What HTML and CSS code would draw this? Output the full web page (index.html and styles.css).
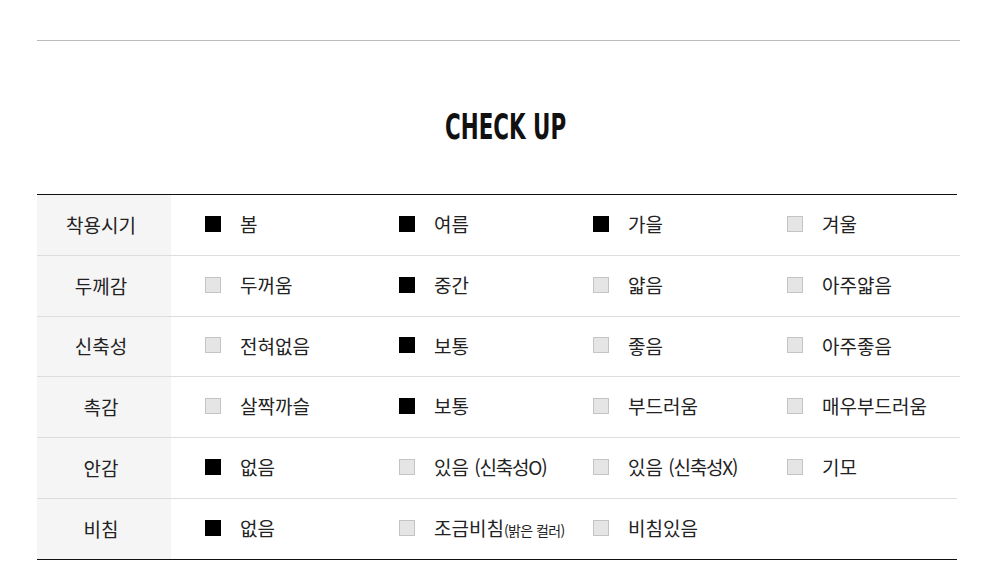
FILE: index.html
```html
<!DOCTYPE html>
<html lang="ko">
<head>
<meta charset="utf-8">
<link rel="stylesheet" href="styles.css">
</head>
<body>
<div class="wrap">
  <div class="topline"></div>
  <h2 class="title">CHECK UP</h2>
  <div class="table">
    <div class="row">
      <div class="head">착용시기</div>
      <div class="opts">
        <div class="opt"><span class="box on"></span><span class="lbl">봄</span></div>
        <div class="opt"><span class="box on"></span><span class="lbl">여름</span></div>
        <div class="opt"><span class="box on"></span><span class="lbl">가을</span></div>
        <div class="opt"><span class="box"></span><span class="lbl">겨울</span></div>
      </div>
    </div>
    <div class="row">
      <div class="head">두께감</div>
      <div class="opts">
        <div class="opt"><span class="box"></span><span class="lbl">두꺼움</span></div>
        <div class="opt"><span class="box on"></span><span class="lbl">중간</span></div>
        <div class="opt"><span class="box"></span><span class="lbl">얇음</span></div>
        <div class="opt"><span class="box"></span><span class="lbl">아주얇음</span></div>
      </div>
    </div>
    <div class="row">
      <div class="head">신축성</div>
      <div class="opts">
        <div class="opt"><span class="box"></span><span class="lbl">전혀없음</span></div>
        <div class="opt"><span class="box on"></span><span class="lbl">보통</span></div>
        <div class="opt"><span class="box"></span><span class="lbl">좋음</span></div>
        <div class="opt"><span class="box"></span><span class="lbl">아주좋음</span></div>
      </div>
    </div>
    <div class="row">
      <div class="head">촉감</div>
      <div class="opts">
        <div class="opt"><span class="box"></span><span class="lbl">살짝까슬</span></div>
        <div class="opt"><span class="box on"></span><span class="lbl">보통</span></div>
        <div class="opt"><span class="box"></span><span class="lbl">부드러움</span></div>
        <div class="opt"><span class="box"></span><span class="lbl">매우부드러움</span></div>
      </div>
    </div>
    <div class="row">
      <div class="head">안감</div>
      <div class="opts">
        <div class="opt"><span class="box on"></span><span class="lbl">없음</span></div>
        <div class="opt"><span class="box"></span><span class="lbl">있음 <span class="paren">(신축성O)</span></span></div>
        <div class="opt"><span class="box"></span><span class="lbl">있음 <span class="paren">(신축성X)</span></span></div>
        <div class="opt"><span class="box"></span><span class="lbl">기모</span></div>
      </div>
    </div>
    <div class="row">
      <div class="head">비침</div>
      <div class="opts">
        <div class="opt"><span class="box on"></span><span class="lbl">없음</span></div>
        <div class="opt"><span class="box"></span><span class="lbl">조금비침<span class="small">(밝은 컬러)</span></span></div>
        <div class="opt"><span class="box"></span><span class="lbl">비침있음</span></div>
        <div class="opt"></div>
      </div>
    </div>
  </div>
</div>
</body>
</html>
```

FILE: styles.css
```css
html, body {
  margin: 0;
  padding: 0;
  background: #fff;
}
body {
  font-family: "Noto Sans CJK KR", "Noto Sans", sans-serif;
  color: #222;
}
.wrap {
  width: 923px;
  margin: 0 0 0 37px;
  padding-top: 40px;
}
.topline {
  height: 1px;
  background: #bbb;
}
.title {
  margin: 66px 0 47px;
  padding-left: 21px;
  text-align: center;
  font-family: "DejaVu Sans", sans-serif;
  font-stretch: condensed;
  font-weight: bold;
  font-size: 35px;
  line-height: 40px;
  height: 40px;
  color: #111;
  transform: scaleX(0.68);
}
.table {
  border-top: 1px solid #111;
  margin-right: 3px;
  border-bottom: 1px solid #111;
}
.row {
  display: flex;
  height: 60px;
  border-top: 1px solid #ddd;
  margin-right: -3px;
}
.row:first-child {
  border-top: none;
  margin-right: 0;
}
.row:nth-child(3) {
  height: 59px;
}
.row:last-child {
  margin-right: 0;
}
.head {
  width: 134px;
  background: #f5f5f5;
  display: flex;
  align-items: center;
  justify-content: center;
  font-size: 19px;
  padding: 0 6px 2px 0;
  box-sizing: border-box;
}
.opts {
  flex: 1;
  display: grid;
  grid-template-columns: 194px 194px 194px 1fr;
  padding-left: 34px;
}
.opt {
  display: flex;
  align-items: center;
  padding-bottom: 3px;
}
.box {
  width: 16px;
  height: 16px;
  box-sizing: border-box;
  background: #e5e5e5;
  border: 1px solid #c4c4c4;
  flex: none;
}
.box.on {
  background: #000;
  border-color: #000;
}
.lbl {
  margin-left: 19px;
  font-size: 19px;
  white-space: nowrap;
}
.paren {
  letter-spacing: -1.2px;
}
.small {
  font-size: 14px;
  letter-spacing: -0.6px;
}
```
